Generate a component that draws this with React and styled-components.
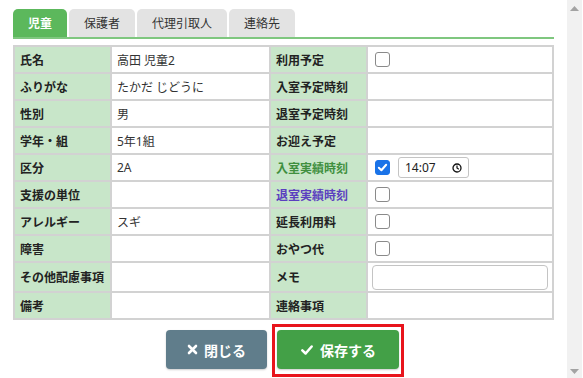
import React from "react";
import styled, { createGlobalStyle } from "styled-components";

const Global = createGlobalStyle`
  html, body { margin: 0; padding: 0; background: #fff; }
  body { font-family: "Noto Sans", "Noto Sans CJK JP", sans-serif; }
  * { box-sizing: border-box; }
`;

const Page = styled.div`
  display: flex;
  width: 583px;
  height: 378px;
  overflow: hidden;
  background: #fff;
`;

const Main = styled.div`
  flex: 1;
  padding: 9px 13px 0 13px;
  display: flex;
  flex-direction: column;
`;

const Scrollbar = styled.div`
  width: 17px;
  margin-right: 1px;
  background: #f1f1f1;
  display: flex;
  flex-direction: column;
  justify-content: space-between;
  align-items: center;
  padding: 6px 0 4px;
`;

const TabBar = styled.div`
  display: flex;
  gap: 2px;
  border-bottom: 2px solid #7fc77f;
`;

const Tab = styled.div`
  height: 28px;
  padding: 0 15px;
  display: flex;
  align-items: center;
  font-size: 12px;
  border-radius: 5px 5px 0 0;
  background: ${(p) => (p.$active ? "#5cb85c" : "#e3e3e3")};
  color: ${(p) => (p.$active ? "#fff" : "#333")};
  font-weight: ${(p) => (p.$active ? 700 : 400)};
`;

const Table = styled.table`
  margin-top: 6px;
  width: 539px;
  border-collapse: collapse;
  table-layout: fixed;
  border: 2px solid #d2d2d2;
`;

const Row = styled.tr``;

const Label = styled.th`
  background: #c8e6c9;
  border: 2px solid #d2d2d2;
  height: ${(p) => (p.$tall ? "30px" : "27px")};
  padding: 0 5px;
  text-align: left;
  font-size: 12px;
  font-weight: 700;
  color: ${(p) => p.$color || "#222"};
  white-space: nowrap;
`;

const Value = styled.td`
  background: #fff;
  border: 2px solid #d2d2d2;
  padding: 0 5px;
  font-size: 12px;
  color: #333;
  white-space: nowrap;
`;

const ControlCell = styled.td`
  background: #fff;
  border: 2px solid #d2d2d2;
  padding: ${(p) => (p.$pad ? p.$pad : "0 7px")};
  vertical-align: middle;
`;

const Inline = styled.div`
  display: flex;
  align-items: center;
  gap: 8px;
`;

const Box = styled.span`
  width: 15px;
  height: 15px;
  border-radius: 3px;
  display: inline-flex;
  align-items: center;
  justify-content: center;
  border: 1px solid ${(p) => (p.$checked ? "#1a73e8" : "#8a8a8a")};
  background: ${(p) => (p.$checked ? "#1a73e8" : "#fff")};
  vertical-align: middle;
`;

const TimeField = styled.div`
  width: 71px;
  height: 21px;
  border: 1px solid #c4c4c4;
  border-radius: 3px;
  display: flex;
  align-items: center;
  justify-content: space-between;
  padding: 0 6px 0 6px;
  font-size: 12px;
  color: #222;
`;

const MemoInput = styled.div`
  width: 100%;
  height: 25px;
  border: 1px solid #c4c4c4;
  border-radius: 4px;
  background: #fff;
`;

const ButtonRow = styled.div`
  display: flex;
  justify-content: center;
  gap: 10px;
  margin-top: 10px;
  width: 539px;
`;

const Button = styled.button`
  position: relative;
  height: 39px;
  padding: 0 ${(p) => p.$px || "19px"};
  border: none;
  border-radius: 4px;
  background: ${(p) => p.$bg};
  color: #fff;
  font-family: "Noto Sans", "Noto Sans CJK JP", sans-serif;
  font-size: 14px;
  font-weight: 700;
  display: flex;
  align-items: center;
  gap: 6px;
  box-shadow: 0 1px 2px rgba(0, 0, 0, 0.2);
  outline: none;
  &::after {
    content: "";
    display: ${(p) => (p.$focused ? "block" : "none")};
    position: absolute;
    inset: -6px -5px -8px -5px;
    border: 3px solid #e8141c;
    pointer-events: none;
  }
`;

const Check = ({ size = 11, color = "#fff" }) => (
  <svg width={size} height={size} viewBox="0 0 12 12">
    <path d="M2 6.3 L4.8 9 L10 3" fill="none" stroke={color} strokeWidth="2.2" strokeLinecap="round" strokeLinejoin="round" />
  </svg>
);

const Checkbox = ({ checked }) => (
  <Box $checked={checked}>{checked && <Check />}</Box>
);

const Clock = () => (
  <svg width="10" height="10" viewBox="0 0 10 10">
    <circle cx="5" cy="5" r="4" fill="none" stroke="#111" strokeWidth="1.3" />
    <path d="M5 2.6 V5 L6.8 6.3" fill="none" stroke="#111" strokeWidth="1.2" />
  </svg>
);

const Tri = ({ down }) => (
  <svg width="9" height="5" viewBox="0 0 9 5">
    <path d={down ? "M0 0 H9 L4.5 5 Z" : "M0 5 H9 L4.5 0 Z"} fill="#a3a3a3" />
  </svg>
);

const rows = [
  ["氏名", "高田 児童2", { label: "利用予定", ctrl: "check" }],
  ["ふりがな", "たかだ じどうに", { label: "入室予定時刻" }],
  ["性別", "男", { label: "退室予定時刻" }],
  ["学年・組", "5年1組", { label: "お迎え予定" }],
  ["区分", "2A", { label: "入室実績時刻", color: "#3f8f3f", ctrl: "time" }],
  ["支援の単位", "", { label: "退室実績時刻", color: "#5b3fc0", ctrl: "check" }],
  ["アレルギー", "スギ", { label: "延長利用料", ctrl: "check" }],
  ["障害", "", { label: "おやつ代", ctrl: "check" }],
  ["その他配慮事項", "", { label: "メモ", ctrl: "memo" }],
  ["備考", "", { label: "連絡事項" }],
];

const renderCtrl = (r) => {
  if (r.ctrl === "check") return <ControlCell><Inline><Checkbox /></Inline></ControlCell>;
  if (r.ctrl === "time")
    return (
      <ControlCell>
        <Inline>
          <Checkbox checked />
          <TimeField>
            <span>14:07</span>
            <Clock />
          </TimeField>
        </Inline>
      </ControlCell>
    );
  if (r.ctrl === "memo") return <ControlCell $pad="0 4px"><MemoInput /></ControlCell>;
  return <Value />;
};

export default function App() {
  return (
    <Page>
      <Global />
      <Main>
        <TabBar>
          <Tab $active>児童</Tab>
          <Tab>保護者</Tab>
          <Tab>代理引取人</Tab>
          <Tab>連絡先</Tab>
        </TabBar>
        <Table>
          <colgroup>
            <col style={{ width: 97 }} />
            <col style={{ width: 159 }} />
            <col style={{ width: 97 }} />
            <col style={{ width: 186 }} />
          </colgroup>
          <tbody>
            {rows.map(([l, v, r]) => (
              <Row key={l}>
                <Label $tall={r.ctrl === "memo"}>{l}</Label>
                <Value>{v}</Value>
                <Label $color={r.color}>{r.label}</Label>
                {renderCtrl(r)}
              </Row>
            ))}
          </tbody>
        </Table>
        <ButtonRow>
          <Button $bg="#607d8b" $px="21px">
            <svg width="11" height="11" viewBox="0 0 11 11">
              <path d="M2 2 L9 9 M9 2 L2 9" stroke="#fff" strokeWidth="2.6" strokeLinecap="round" />
            </svg>
            閉じる
          </Button>
          <Button $bg="#43a047" $px="23px" $focused>
            <Check size={14} />
            保存する
          </Button>
        </ButtonRow>
      </Main>
      <Scrollbar>
        <Tri />
        <Tri down />
      </Scrollbar>
    </Page>
  );
}
